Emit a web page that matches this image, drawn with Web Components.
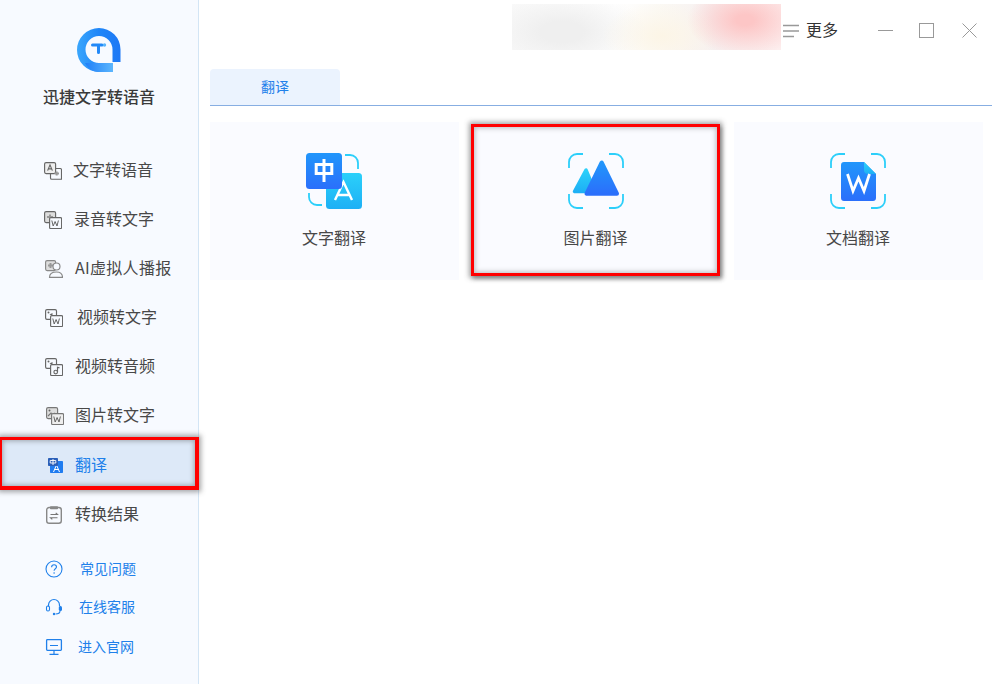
<!DOCTYPE html>
<html lang="zh">
<head>
<meta charset="utf-8">
<title>迅捷文字转语音</title>
<style>
  html, body { margin: 0; height: 100%; background: #fff; }
  body { font-family: "Noto Sans CJK SC", "Liberation Sans", sans-serif; color: #444; overflow: hidden; }
</style>
</head>
<body>
<svg width="0" height="0" style="position:absolute">
  <defs>
    <linearGradient id="gBlue" x1="0" y1="0" x2="0" y2="1"><stop offset="0" stop-color="#2196fb"/><stop offset="1" stop-color="#2b6ffb"/></linearGradient>
    <linearGradient id="gCyan" x1="0" y1="0" x2="0" y2="1"><stop offset="0" stop-color="#2bd0fa"/><stop offset="1" stop-color="#1eb0f5"/></linearGradient>
  </defs>
</svg>
<app-shell>
  <side-bar slot="side">
    <nav-item text="文字转语音" pad="44" gap="11">
      <svg viewBox="0 0 18 18" stroke-width="1.15"><rect x=".6" y=".6" width="11" height="11" rx="1.5" fill="#eee" stroke="#666"/><path d="M3.6 8.6 6 2.9l2.4 5.7M4.4 6.8h3.2" fill="none" stroke="#666"/><path d="M6.5 11.600v4.300c0 .8.5 1.300 1.300 1.300h9.700V7.800c0-.8-.5-1.300-1.300-1.300h-4.600" fill="none" stroke="#666"/><path d="M10.500 11.500h4.500M12.700 9.500v4" stroke="#999" stroke-width="2"/></svg>
    </nav-item>
    <nav-item text="录音转文字" pad="44" gap="12">
      <svg viewBox="0 0 18 18" stroke-width="1.15"><rect x=".6" y=".6" width="11" height="11" rx="1.5" fill="#ddd" stroke="#666"/><path d="M3 6h6M6 3.500v5" stroke="#999" stroke-width="2"/><rect x="5.600" y="6.600" width="12" height="11" rx="1.200" fill="#f7faff" stroke="#666"/><path d="M7.800 9.500l1.400 5.500 1.900-4.500 1.900 4.500 1.400-5.500" fill="none" stroke="#666" stroke-width="1"/></svg>
    </nav-item>
    <nav-item text="AI虚拟人播报" pad="45" gap="12" track=".3">
      <svg viewBox="0 0 18 18" stroke-width="1.15"><rect x=".6" y=".6" width="10" height="10" rx="1.500" fill="#ddd" stroke="#888"/><path d="M3 5.500h5M5.500 3v5" stroke="#999" stroke-width="2"/><circle cx="11.500" cy="6.500" r="3.500" fill="#f7faff" stroke="#888"/><path d="M4.500 17.400c0-3.600 3-5.400 7-5.400s6 1.800 6 5.400z" fill="#f7faff" stroke="#888"/></svg>
    </nav-item>
    <nav-item text="视频转文字" pad="45" gap="14">
      <svg viewBox="0 0 18 18" stroke-width="1.15"><path d="M11.500 6V2c0-.8-.6-1.400-1.400-1.400H2C1.200.6.600 1.200.6 2v7c0 .8.600 1.400 1.400 1.400h3.500" fill="none" stroke="#666"/><circle cx="3.500" cy="3.500" r="1" fill="#666"/><path d="M4.500 5.500l3-1.500v3z" fill="#666"/><rect x="5.600" y="6.600" width="12" height="11" rx="1.200" fill="#f7faff" stroke="#666"/><path d="M7.800 9.500l1.400 5.500 1.900-4.500 1.900 4.500 1.400-5.500" fill="none" stroke="#666" stroke-width="1"/></svg>
    </nav-item>
    <nav-item text="视频转音频" pad="45" gap="12">
      <svg viewBox="0 0 18 18" stroke-width="1.15"><path d="M11.500 6V2c0-.8-.6-1.400-1.400-1.400H2C1.200.6.600 1.200.6 2v7c0 .8.600 1.400 1.400 1.400h3.500" fill="none" stroke="#666"/><circle cx="3.500" cy="3.500" r="1" fill="#666"/><path d="M4.500 5.500l3-1.500v3z" fill="#666"/><rect x="5.600" y="6.600" width="12" height="11" rx="1.200" fill="#f7faff" stroke="#666"/><circle cx="10.700" cy="14" r="1.800" fill="none" stroke="#666"/><path d="M12.500 14V9.300l2 .6" fill="none" stroke="#666"/></svg>
    </nav-item>
    <nav-item text="图片转文字" pad="46" gap="11">
      <svg viewBox="0 0 18 18" stroke-width="1.15"><rect x=".6" y=".6" width="11" height="11" rx="1.500" fill="#ddd" stroke="#777"/><circle cx="3.500" cy="3.500" r="1" fill="#666"/><path d="M2 9l3-3 2 2 2-2" fill="none" stroke="#777"/><rect x="5.600" y="6.600" width="12" height="11" rx="1.200" fill="#eee" stroke="#777"/><path d="M7.800 9.500l1.400 5.500 1.900-4.500 1.900 4.500 1.400-5.500" fill="none" stroke="#666" stroke-width="1"/></svg>
    </nav-item>
    <nav-item text="翻译" pad="46" gap="12" active>
      <svg viewBox="0 0 15 15"><rect x="2" y="3" width="13" height="12" rx=".8" fill="#1f7cf0"/><path d="M5.500 14l3-7 3 7M6.700 11.500h3.600" fill="none" stroke="#fff" stroke-width="1"/><rect width="10" height="8" rx=".8" fill="#2a5fb8"/><path d="M2.200 2.500h5.600v2.500H2.200zM5 1v6" fill="none" stroke="#fff" stroke-width=".9"/></svg>
    </nav-item>
    <nav-item text="转换结果" pad="44" gap="13">
      <svg viewBox="0 0 18 18"><rect x="2.700" y="1.500" width="14.600" height="15.800" rx="2.500" fill="none" stroke="#888" stroke-width="1.400"/><rect x="6" y=".2" width="8" height="3" rx=".8" fill="#888"/><path d="M6.500 8.500h7l-1.800-1.600M13.500 11.700h-7l1.800 1.600" fill="none" stroke="#777" stroke-width="1.100"/></svg>
    </nav-item>
    <div slot="links">
      <side-link text="常见问题" gap="17" h="38">
        <svg viewBox="0 0 18 18"><circle cx="9" cy="9" r="8" fill="none" stroke="#2080ea" stroke-width="1.100"/><path d="M6.600 7.200c0-1.500 1.100-2.400 2.500-2.400s2.400.9 2.400 2.200c0 1.700-2.400 1.800-2.400 3.700" fill="none" stroke="#2080ea" stroke-width="1.100"/><circle cx="9.100" cy="13" r=".8" fill="#2080ea"/></svg>
      </side-link>
      <side-link text="在线客服" gap="16" h="38">
        <svg viewBox="0 0 18 18"><path d="M3.500 8.500V7a5.500 5.500 0 0 1 11 0v1.500" fill="none" stroke="#2080ea" stroke-width="1.200"/><rect x="1.500" y="8" width="3" height="5" rx="1.400" fill="none" stroke="#2080ea" stroke-width="1.100"/><rect x="13.800" y="8" width="3.200" height="5" rx="1.500" fill="#2080ea"/><path d="M15 13c0 2.200-1.800 3-4.500 3" fill="none" stroke="#2080ea" stroke-width="1.100"/><circle cx="9" cy="16" r="1.200" fill="#2080ea"/></svg>
      </side-link>
      <side-link text="进入官网" gap="15" h="42">
        <svg viewBox="0 0 18 18"><rect x="1.600" y="1.600" width="14.800" height="10.800" rx=".8" fill="none" stroke="#2080ea" stroke-width="1.300"/><path d="M5 7.500h8M9 12.500v3.500M4.500 16.400h9" stroke="#2080ea" stroke-width="1.200"/></svg>
      </side-link>
    </div>
  </side-bar>
  <top-bar></top-bar>
  <tab-strip label="翻译"></tab-strip>
  <card-grid>
    <tool-card text="文字翻译">
      <svg viewBox="0 0 56 56"><path d="M39 2h5c4.500 0 8 3.500 8 8v6" fill="none" stroke="#2ccffa" stroke-width="1.800"/><path d="M3 40v4c0 4.500 3.500 8 8 8h5" fill="none" stroke="#2ccffa" stroke-width="1.800"/><rect x="20" y="20" width="36" height="36" rx="3.500" fill="url(#gCyan)"/><path d="M29 47l8.500-18L46 47M32 42h11" fill="none" stroke="#fff" stroke-width="2.400"/><rect width="36" height="36" rx="3.500" fill="url(#gBlue)"/><path d="M10.200 11.500h15.600v9H10.200zM18 6v23" fill="none" stroke="#fff" stroke-width="3"/></svg>
    </tool-card>
    <tool-card text="图片翻译" marked>
      <svg viewBox="0 0 56 56"><g fill="none" stroke="#2ccffa" stroke-width="1.800"><path d="M15 1H9C4.600 1 1 4.600 1 9v6"/><path d="M41 1h6c4.400 0 8 3.600 8 8v6"/><path d="M15 55H9c-4.400 0-8-3.600-8-8v-6"/><path d="M41 55h6c4.400 0 8-3.600 8-8v-6"/></g><path d="M18 17 6.500 38.500H27z" fill="url(#gCyan)" stroke="url(#gCyan)" stroke-width="3.500" stroke-linejoin="round"/><path d="M33.700 9.500 18.500 40.700h30.500z" fill="url(#gBlue)" stroke="url(#gBlue)" stroke-width="4" stroke-linejoin="round"/></svg>
    </tool-card>
    <tool-card text="文档翻译">
      <svg viewBox="0 0 56 56"><g fill="none" stroke="#2ccffa" stroke-width="1.800"><path d="M15 1H9C4.600 1 1 4.600 1 9v6"/><path d="M41 1h6c4.400 0 8 3.600 8 8v6"/><path d="M15 55H9c-4.400 0-8-3.600-8-8v-6"/><path d="M41 55h6c4.400 0 8-3.600 8-8v-6"/></g><path d="M14 9h20l12 12v24c0 1.800-1.200 3-3 3H14c-1.800 0-3-1.200-3-3V12c0-1.800 1.200-3 3-3z" fill="url(#gBlue)"/><path d="M34 9l12 12H38c-2.500 0-4-1.500-4-4z" fill="url(#gCyan)"/><path d="M17.500 21l5.500 17 5.500-13 5.500 13 5.500-17" fill="none" stroke="#fff" stroke-width="2.800"/></svg>
    </tool-card>
  </card-grid>
</app-shell>
<script>
function define(name, css, html) {
  customElements.define(name, class extends HTMLElement {
    connectedCallback() {
      if (this.shadowRoot) return;
      this.attachShadow({ mode: 'open' });
      this.shadowRoot.innerHTML = `<style>${css}</style>${html(this)}`;
    }
  });
}

define('app-shell', `
  :host { display: flex; height: 684px; }
  .main { flex: 1; min-width: 0; display: flex; flex-direction: column; padding: 0 15px 0 11px; }
`, () => `<slot name="side"></slot><div class="main"><slot></slot></div>`);

define('side-bar', `
  :host { display: flex; flex-direction: column; width: 199px; height: 684px; flex: none; box-sizing: border-box;
    background: #f7faff; border-right: 1px solid #d3e5f5; }
  .brand { display: flex; flex-direction: column; align-items: center; padding-top: 28px; height: 118px; }
  .brand svg { width: 44px; height: 44px; display: block; }
  .brand span { margin-top: 13px; font-size: 16px; line-height: 22px; font-weight: 500; color: #3a3a3a; }
  .links { margin-top: 11px; }
`, () => `
  <div class="brand">
    <svg viewBox="0 0 44 44">
      <defs>
        <linearGradient id="lg1" x1="0" y1="0" x2="1" y2="0"><stop offset="0" stop-color="#3aa6fc"/><stop offset=".5" stop-color="#1f86f8"/><stop offset="1" stop-color="#1e78f5"/></linearGradient>
        <linearGradient id="lg2" x1="0" y1="0" x2="1" y2="0"><stop offset="0" stop-color="#1e7ef8"/><stop offset="1" stop-color="#5cb6fd"/></linearGradient>
      </defs>
      <path d="M22 0a21.500 21.500 0 0 1 21.500 21.500V34h-8V21.500A13.500 13.500 0 1 0 22 35h14v9H22A22 22 0 0 1 22 0z" fill="url(#lg1)"/>
      <path d="M8 35c3.500 0 8 0 14 0h14v9H22C16 44 11 40.500 8 35z" fill="url(#lg2)"/>
      <path d="M15.500 17H25M21.500 17v7.500" fill="none" stroke="#2289f8" stroke-width="3" stroke-linecap="round"/>
      <circle cx="27.500" cy="17" r="1.700" fill="#57b4fc"/>
    </svg>
    <span>迅捷文字转语音</span>
  </div>
  <slot></slot>
  <div class="links"><slot name="links"></slot></div>
`);

define('nav-item', `
  :host { display: flex; align-items: center; height: 49px; box-sizing: border-box; font-size: 16px; color: #484848; }
  :host([active]) { color: #2080ea; background: #dde9f8; border: solid #f00; border-width: 3px 4px 4px 2px; height: 53px; margin: -3px -1px 0 0;
    box-shadow: 0 0 5px 2px rgba(60,60,60,.45), inset 0 0 5px 1px rgba(60,60,60,.4); position: relative; z-index: 1; }
  ::slotted(svg) { width: 18px; height: 18px; flex: none; display: block; }
  :host([active]) ::slotted(svg) { width: 15px; height: 15px; margin-top: 4px; }
  span { margin-bottom: 3px; }
  :host([active]) span { margin: 1px 0 0; }
`, el => `<style>:host{padding-left:${el.getAttribute('pad')}px}</style><slot></slot><span style="margin-left:${el.getAttribute('gap')}px;letter-spacing:${el.getAttribute('track') || 0}px">${el.getAttribute('text')}</span>`);

define('side-link', `
  :host { display: flex; align-items: center; padding-left: 45px; font-size: 14px; color: #2080ea; }
  ::slotted(svg) { width: 18px; height: 18px; flex: none; display: block; }
  span { margin-bottom: 2px; }
`, el => `<style>:host{height:${el.getAttribute('h')}px}</style><slot></slot><span style="margin-left:${el.getAttribute('gap')}px">${el.getAttribute('text')}</span>`);

define('top-bar', `
  :host { display: flex; align-items: flex-start; height: 69px; margin-left: 302px; margin-right: -15px; }
  .blur { width: 269px; height: 46px; margin-top: 4px; flex: none;
    background:
      radial-gradient(ellipse 58px 36px at 233px 16px, #fdc6c6 15%, rgba(253,198,198,0) 100%),
      radial-gradient(ellipse 60px 34px at 150px 32px, #fcf5e6 0, rgba(252,245,230,0) 100%),
      radial-gradient(ellipse 85px 42px at 50px 28px, #efefef 25%, rgba(240,240,240,0) 100%),
      linear-gradient(90deg, #fbfbfb 0, #fff 38%, #fbf9f5 55%, #f6f0f0 75%, #fdeeee 100%); }
  .more { display: flex; align-items: center; margin-left: 2px; height: 58px; font-size: 16px; color: #333; }
  .more svg { width: 16px; height: 14px; margin-right: 7px; margin-top: 3px; }
  .ctl { display: flex; margin-left: 40px; height: 61px; align-items: center; gap: 26px; }
  .ctl svg { width: 15px; height: 15px; display: block; }
  .ctl svg:last-child { margin-left: 2px; }
`, () => `
  <div class="blur"></div>
  <div class="more">
    <svg viewBox="0 0 16 14"><path d="M0 1.500h16M0 7h16M0 12.500h11" stroke="#999" stroke-width="1.500"/></svg>
    <span>更多</span>
  </div>
  <div class="ctl">
    <svg viewBox="0 0 15 15"><path d="M0 7.500h15" stroke="#999"/></svg>
    <svg viewBox="0 0 15 15"><rect x=".5" y=".5" width="14" height="14" fill="none" stroke="#999"/></svg>
    <svg viewBox="0 0 15 15"><path d="M.5.500l14 14M14.500.500l-14 14" stroke="#999"/></svg>
  </div>
`);

define('tab-strip', `
  :host { display: block; border-bottom: 1px solid #87aee2; height: 36px; }
  div { width: 130px; height: 36px; background: #ebf3fe; border-radius: 4px 4px 0 0; text-align: center; line-height: 34px; font-size: 14px; color: #1f80ea; }
`, el => `<div>${el.getAttribute('label')}</div>`);

define('card-grid', `
  :host { display: grid; grid-template-columns: repeat(3, 249px); gap: 13px; margin-top: 16px; align-items: start; }
`, () => `<slot></slot>`);

define('tool-card', `
  :host { display: flex; flex-direction: column; align-items: center; box-sizing: border-box; height: 158px; padding: 31px 1px 0 0; background: #fafbff; font-size: 16px; color: #484848; }
  :host([marked]) { height: 152px; margin: 2px 1px 0 -1px; padding: 26px 0 0; border: 3px solid #f00; box-shadow: 0 0 5px 2px rgba(60,60,60,.45), 2px 3px 4px rgba(60,60,60,.4), inset 0 0 5px 1px rgba(60,60,60,.35); }
  ::slotted(svg) { width: 56px; height: 56px; display: block; }
  span { margin-top: 16px; line-height: 24px; }
`, el => `<slot></slot><span>${el.getAttribute('text')}</span>`);
</script>
</body>
</html>
